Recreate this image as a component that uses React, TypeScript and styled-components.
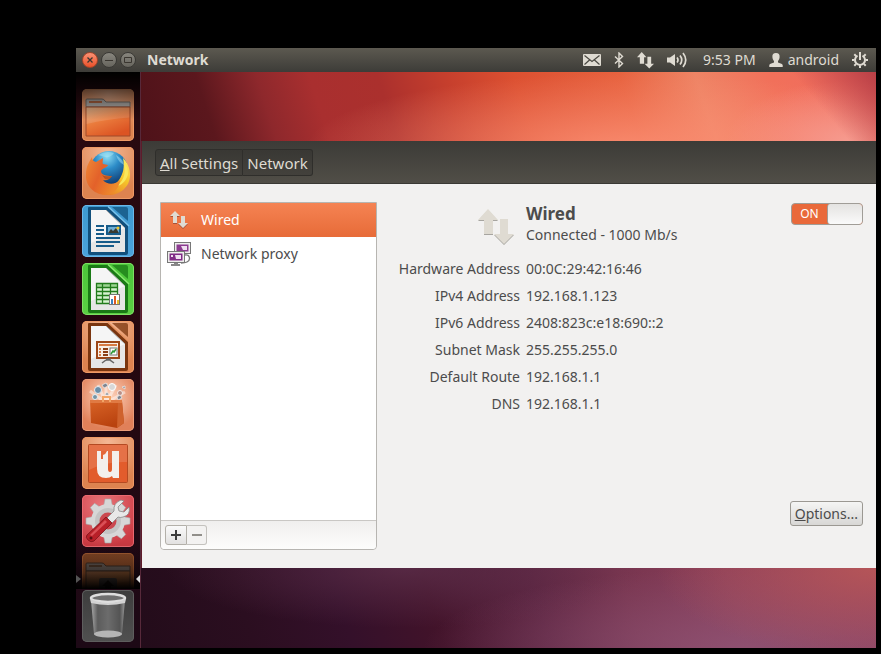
import React from "react";
import styled, { createGlobalStyle } from "styled-components";

const GlobalStyle = createGlobalStyle`
  *, *::before, *::after { box-sizing: border-box; }
  body {
    margin: 0;
    background: #000;
    font-family: "Noto Sans", "Open Sans", sans-serif;
    font-size: 14px;
    line-height: 20px;
    color: #4c4c4c;
  }
  button, input { font: inherit; color: inherit; }
  svg { display: block; }
  h1, h2, p, dl, dd, ul { margin: 0; padding: 0; }
`;

const Screen = styled.div`
  height: 100vh;
  padding: 48px 5px 6px 76px;
  display: flex;
  flex-direction: column;
`;

/* ---------- top panel ---------- */

const Panel = styled.header`
  flex: none;
  height: 24px;
  padding: 0 8px 0 6px;
  display: flex;
  align-items: center;
  gap: 3px;
  background: linear-gradient(#5c5950, #3d3c38);
  color: #dfdbd2;
`;

const WindowButton = styled.button<{ $close?: boolean }>`
  width: 16px;
  height: 16px;
  padding: 0;
  display: grid;
  place-items: center;
  border: 1px solid ${(p) => (p.$close ? "#a5452a" : "#3a3935")};
  border-radius: 50%;
  background: ${(p) =>
    p.$close ? "linear-gradient(#fb9274, #e9512a)" : "linear-gradient(#88867e, #66645d)"};
  color: #3a3630;
`;

const PanelTitle = styled.h1`
  margin-left: 8px;
  font-size: 14px;
  line-height: 24px;
  font-weight: 700;
`;

const Indicators = styled.div`
  margin-left: auto;
  display: flex;
  align-items: center;
  gap: 13px;
`;

const Indicator = styled.button`
  padding: 0;
  display: flex;
  align-items: center;
  gap: 5px;
  border: 0;
  background: none;
  line-height: 24px;
`;

const Clock = styled(Indicator)`
  padding-left: 2px;
`;

/* ---------- launcher ---------- */

const Desktop = styled.div`
  flex: 1;
  min-height: 0;
  display: flex;
`;

const Launcher = styled.nav`
  flex: none;
  width: 65px;
  padding-bottom: 6px;
  display: flex;
  flex-direction: column;
  gap: 1px;
  border-right: 1px solid #57293a;
  background: linear-gradient(#2a0a10, #25080f 50%, #1d0916);
`;

const LauncherList = styled.div`
  position: relative;
  flex: 1;
  min-height: 0;
  overflow: hidden;
  padding: 17px 6px 0;
  display: flex;
  flex-direction: column;
  gap: 6px;
`;

const LauncherShade = styled.div`
  position: absolute;
  inset: 0;
  pointer-events: none;
  background:
    linear-gradient(#000 0, rgba(0, 0, 0, 0.7) 14px, rgba(0, 0, 0, 0) 48px),
    linear-gradient(to top, #000 0, rgba(0, 0, 0, 0.4) 16px, rgba(0, 0, 0, 0.1) 34px, rgba(0, 0, 0, 0) 50px);
`;

const RunningMarks = styled.svg`
  position: absolute;
  left: 0;
  bottom: 5px;
  width: 100%;
  height: 10px;
`;

const tints = {
  orange: "radial-gradient(circle at 50% 10%, #f4b794, #dd8350 75%)",
  blue: "linear-gradient(#3d99cf, #4ba3dc)",
  green: "linear-gradient(#4bc63a, #5bd043)",
  coral: "radial-gradient(circle at 50% 35%, #ffd9c4, #e08059 75%)",
  red: "radial-gradient(circle at 40% 20%, #e8757a, #cc3b43 80%)",
  brown: "linear-gradient(#7b4223, #8f4c26)",
  grey: "linear-gradient(#3d3d3d, #505050)",
};
const edges = {
  orange: "#ee9a66",
  blue: "#6bb8e8",
  green: "#7fe065",
  coral: "#ea9c78",
  red: "#ea6a70",
  brown: "#a05a30",
  grey: "#5e5e5e",
};

const Tile = styled.button<{ $tint: keyof typeof tints }>`
  flex: none;
  width: 52px;
  height: 52px;
  padding: 0;
  display: grid;
  place-items: center;
  border: 0;
  border-radius: 5px;
  background: ${(p) => tints[p.$tint]};
  box-shadow: inset 0 0 0 1px ${(p) => edges[p.$tint]};
`;

const TrashSlot = styled.div`
  padding: 0 6px;
`;

/* ---------- wallpaper and window ---------- */

const Workspace = styled.main`
  flex: 1;
  min-width: 0;
  padding: 69px 0 80px 1px;
  display: flex;
  background:
    linear-gradient(50deg, rgba(190, 65, 70, 0) calc(100% - 65px), #b83f46 100%) 0 0 / 100% 69px no-repeat,
    radial-gradient(ellipse 120px 60px at 96% 100%, #f69a8e, rgba(245, 130, 115, 0) 100%) 0 0 / 100% 69px no-repeat,
    radial-gradient(ellipse 320px 75px at 66% 110%, rgba(252, 145, 118, 0.85), rgba(250, 130, 105, 0) 100%) 0 0 / 100% 69px no-repeat,
    linear-gradient(72deg, #4e1219 0, #5b171d 10%, #8e282c 18%, #a92f2f 25%, #ab302d 34%, #c63f2d 43%, #dc5031 52%, #e7623f 66%, #ee8465 76%, #f1705a 86%, #ef6a60 100%) 0 0 / 100% 69px no-repeat,
    radial-gradient(ellipse 220px 90px at 100% 0, #b55558, rgba(179, 80, 88, 0) 100%) 0 100% / 100% 80px no-repeat,
    radial-gradient(ellipse 320px 80px at 82% 100%, rgba(143, 84, 118, 0.8), rgba(143, 82, 117, 0) 100%) 0 100% / 100% 80px no-repeat,
    radial-gradient(ellipse 240px 60px at 36% 0, rgba(96, 50, 78, 0.7), rgba(85, 40, 70, 0) 100%) 0 100% / 100% 80px no-repeat,
    linear-gradient(74deg, #230c1a 0, #2b0e20 15%, #34102a 28%, #42132a 40%, #5c2440 54%, #78354f 66%, #8a3f5a 80%, #8f4060 100%) 0 100% / 100% 80px no-repeat,
    #5e1c2a;
`;

const Window = styled.section`
  flex: 1;
  min-width: 0;
  display: flex;
  flex-direction: column;
  background: #f2f1f0;
`;

const Toolbar = styled.div`
  flex: none;
  height: 43px;
  padding: 8px 13px;
  display: flex;
  align-items: flex-start;
  background: linear-gradient(#3c3b37, #514e47);
  border-bottom: 1px solid #3a3935;
`;

const Crumb = styled.button`
  height: 27px;
  padding: 0 4px;
  border: 1px solid #2f2e2b;
  background: linear-gradient(#393834, #43413c);
  color: #dfdbd2;
  font-size: 15px;
  line-height: 24px;
  &:first-child { border-radius: 3px 0 0 3px; }
  &:last-child { border-radius: 0 3px 3px 0; border-left: 0; }
`;

const Content = styled.div`
  flex: 1;
  min-height: 0;
  padding: 18px 13px 18px 18px;
  display: flex;
  gap: 12px;
`;

const DevicePane = styled.div`
  flex: none;
  width: 217px;
  display: flex;
  flex-direction: column;
  border: 1px solid #b7b5b1;
  border-radius: 0 0 4px 4px;
  background: #fff;
`;

const DeviceList = styled.ul`
  flex: 1;
  list-style: none;
`;

const DeviceRow = styled.button<{ $selected?: boolean }>`
  width: 100%;
  height: 34px;
  padding: 0 6px;
  display: flex;
  align-items: center;
  gap: 10px;
  border: 0;
  text-align: left;
  background: ${(p) => (p.$selected ? "linear-gradient(#f58353, #e76b38)" : "#fff")};
  color: ${(p) => (p.$selected ? "#fff" : "#4c4c4c")};
`;

const DeviceActions = styled.div`
  flex: none;
  height: 29px;
  padding: 4px;
  display: flex;
  border-top: 1px solid #c9c7c4;
  border-radius: 0 0 4px 4px;
  background: linear-gradient(#f0efee, #fdfdfc);
`;

const ActionButton = styled.button`
  width: 22px;
  height: 20px;
  padding: 0;
  display: grid;
  place-items: center;
  border: 1px solid #b3b0a9;
  border-radius: 3px 0 0 3px;
  background: linear-gradient(#fafafa, #e2e1e0);
  color: #3c3c3c;
  & + & {
    width: 20px;
    border-left: 0;
    border-radius: 0 3px 3px 0;
  }
  &:disabled {
    border-color: #c4c2be;
    background: #f3f2f1;
    color: #918f8a;
  }
`;

const Details = styled.div`
  flex: 1;
  min-width: 0;
  display: flex;
  flex-direction: column;
`;

const DetailsHeader = styled.div`
  display: flex;
  align-items: flex-start;
  gap: 6px;
  margin-bottom: 10px;
`;

const DeviceIcon = styled.div`
  width: 131px;
  padding: 7px 6px 0 0;
  display: flex;
  justify-content: flex-end;
`;

const DeviceHeading = styled.div`
  flex: 1;
  h2 {
    font-size: 17px;
    line-height: 23px;
    font-weight: 700;
  }
`;

const Switch = styled.label`
  margin-top: 1px;
  width: 72px;
  height: 22px;
  display: flex;
  border: 1px solid #a09d97;
  border-radius: 4px;
  background: #e9693a;
  color: #fff;
  font-size: 12px;
  line-height: 20px;
  input {
    appearance: none;
    order: 2;
    width: 35px;
    margin: 0;
    border-left: 1px solid #a09d97;
    border-radius: 3px;
    background: linear-gradient(#e4e3e1, #fafafa);
  }
  span {
    flex: 1;
    text-align: center;
  }
`;

const Facts = styled.dl`
  display: grid;
  grid-template-columns: 131px 1fr;
  column-gap: 6px;
  line-height: 27px;
  dt { text-align: right; }
`;

const OptionsButton = styled.button`
  align-self: flex-end;
  margin: auto 0 24px;
  height: 25px;
  padding: 0 4px;
  border: 1px solid #9b9892;
  border-radius: 3px;
  background: linear-gradient(#f5f5f4, #d8d7d5);
  line-height: 22px;
`;

/* ---------- drawings ---------- */

const UpDown = ({ size, shade }: { size: number; shade?: string }) => (
  <svg width={size} height={size} viewBox="0 0 36 36" aria-hidden="true">
    {shade && (
      <path fill={shade} transform="translate(0 1)" d="M10 0 20 11h-5v14H6V11H0zM22 10h8v15h6L26 35 16 25h6z" />
    )}
    <path fill="#dfdbd2" d="M10 0 20 11h-5v14H6V11H0zM22 10h8v15h6L26 35 16 25h6z" />
  </svg>
);

const Mail = () => (
  <svg width="18" height="12" viewBox="0 0 18 12" aria-hidden="true">
    <rect width="18" height="12" rx="1" fill="#dfdbd2" />
    <path d="M1.5 1.5 9 7.5l7.500-6M1.500 10.500 6.500 6M16.500 10.500 11.500 6" fill="none" stroke="#4a4842" strokeWidth="1.200" />
  </svg>
);

const Bluetooth = () => (
  <svg width="10" height="16" viewBox="0 0 10 16" aria-hidden="true">
    <path d="M1 4.500 8.500 11.500 5 15V1l3.500 3.500L1 11.500" fill="none" stroke="#dfdbd2" strokeWidth="1.400" />
  </svg>
);

const Volume = () => (
  <svg width="21" height="16" viewBox="0 0 21 16" aria-hidden="true" fill="none" stroke="#dfdbd2" strokeWidth="1.700">
    <path d="M0 5.500h3L8 2v12l-5-3.500H0z" fill="#dfdbd2" stroke="none" />
    <path d="M10 5.500q2 2.500 0 5M13 3.500q3.500 4.500 0 9M16 1q5.500 7 0 14" />
  </svg>
);

const Person = () => (
  <svg width="14" height="14" viewBox="0 0 14 14" aria-hidden="true">
    <path fill="#dfdbd2" d="M7 0c2.700 0 3.800 1.600 3.600 4-.1 1.900-.7 3-1.600 4v1.500c1.500.8 4.200.8 4.700 2.500V14H.3v-2c.5-1.700 3.200-1.700 4.700-2.500V8C4.100 7 3.500 5.900 3.400 4 3.200 1.600 4.300 0 7 0z" />
  </svg>
);

const PowerGear = () => (
  <svg width="16" height="16" viewBox="0 0 16 16" aria-hidden="true" fill="none" stroke="#dfdbd2">
    <path d="M5.500 3.600a5 5 0 1 0 5 0" strokeWidth="2" />
    <path d="M8 0v8" strokeWidth="2" />
    <path d="M0 8h2.500M13.500 8H16M8 13.500V16M2.300 2.300l1.800 1.800M13.700 2.300l-1.800 1.800M2.300 13.700l1.800-1.800M13.700 13.700l-1.800-1.800" strokeWidth="2" />
  </svg>
);

const ProxyScreens = () => (
  <svg width="24" height="24" viewBox="0 0 24 24" aria-hidden="true">
    <rect x="7.500" y=".5" width="16" height="11" fill="#eeeeec" stroke="#777" />
    <rect x="9.500" y="2.500" width="12" height="7" fill="#8c3b91" />
    <path d="M14 4h6v4h-4z" fill="#efdff0" />
    <path d="M18 13c5-1 6 5 2 7-2 1-4 1-6 1" fill="none" stroke="#777" strokeWidth="1.300" />
    <rect x=".5" y="9.500" width="17" height="11" fill="#eeeeec" stroke="#777" />
    <rect x="2.500" y="11.500" width="13" height="7" fill="#812b87" />
    <path d="M8 13h6v4H9zM4 13h2v2H4z" fill="#efdff0" />
    <path d="M7 21h4v1h2v2H4v-2h3z" fill="#888" />
  </svg>
);

const Folder = ({ dark }: { dark?: boolean }) => (
  <svg width="52" height="52" viewBox="0 0 52 52" aria-hidden="true">
    <defs>
      <linearGradient id={dark ? "folderDark" : "folder"} x1="0" y1="0" x2=".6" y2="1">
        <stop offset="0" stopColor={dark ? "#6d422a" : "#dba77a"} />
        <stop offset=".5" stopColor={dark ? "#70401f" : "#ea7b3c"} />
        <stop offset="1" stopColor={dark ? "#55301c" : "#dc5423"} />
      </linearGradient>
    </defs>
    <path d="M4 18v-7q0-1 1-1h15q2 0 3 2l1 1h24v5z" fill={dark ? "#5f5550" : "#b4b0ac"} stroke={dark ? "#3b2a20" : "#77706a"} />
    <path d="M7 12h13v2H7z" fill={dark ? "#4a3527" : "#b36743"} />
    <path d="M4 18h44v29H4z" fill={`url(#${dark ? "folderDark" : "folder"})`} stroke={dark ? "#3b2a20" : "#a04b2b"} />
    <path d="M4.500 18.500h43v10Q25 30 4.500 35z" fill="#fff" opacity={dark ? ".04" : ".12"} />
    {dark && (
      <g>
        <rect x="17" y="25" width="18" height="18" rx="2" fill="#3a3230" />
        <path d="m26 27 6 6h-3v5h-6v-5h-3z" fill="#17100c" />
      </g>
    )}
  </svg>
);

const Firefox = () => (
  <svg width="52" height="52" viewBox="0 0 52 52" aria-hidden="true">
    <defs>
      <radialGradient id="globe" cx=".45" cy=".15" r=".8">
        <stop offset="0" stopColor="#8cdcf2" />
        <stop offset=".4" stopColor="#2c8cc8" />
        <stop offset="1" stopColor="#0b2f66" />
      </radialGradient>
      <linearGradient id="fox" x1="0" y1="0" x2="1" y2=".5">
        <stop offset="0" stopColor="#f08a35" />
        <stop offset=".5" stopColor="#e3612a" />
        <stop offset="1" stopColor="#ee8a2b" />
      </linearGradient>
      <linearGradient id="flame" x1="1" y1="0" x2=".4" y2="1">
        <stop offset="0" stopColor="#fff06a" />
        <stop offset=".5" stopColor="#f6c52a" />
        <stop offset="1" stopColor="#e8792b" />
      </linearGradient>
    </defs>
    <circle cx="27" cy="23" r="19" fill="url(#globe)" />
    <path d="M16 8q8-5 16-2-3 5-9 4zM34 8q7 4 8 10-6-3-8-10z" fill="#a8e5f5" opacity=".5" />
    <path d="M41 11c5 5 7 11 7 17 0 12-10 20-21 20-9 0-17-5-20-14 10 8 24 8 30-1 4-6 6-13 4-22z" fill="url(#flame)" />
    <path d="M42 16c2 7 1 17-7 23 6-1 10-7 11-12 0-5-1-8-4-11z" fill="#f9e85c" />
    <path d="M10 10c0 3 1 4 4 5l7-4c0 3-1 5 0 6l5 1c-1 3-6 3-7 6 0 4 5 5 11 5-2 3-5 5-9 4 4 5 12 5 17 0-1 9-7 15-15 15C11 47 3 38 4 27c0-7 3-12 6-17z" fill="url(#fox)" />
    <path d="M20 28c3 2 7 1 10 1-1 3-4 4-7 3z" fill="#903d1d" opacity=".55" />
  </svg>
);

const OfficePage = ({ dark, pale, children }: { dark: string; pale: string; children: React.ReactNode }) => (
  <svg width="52" height="52" viewBox="0 0 52 52" aria-hidden="true">
    <path d="M6 3q0-1 1-1h20l19 18v28q0 2-2 2H8q-2 0-2-2z" fill={dark} />
    <path d="M30 2h14q2 0 2 2v12z" fill={dark} opacity=".75" />
    <path d="M26 1.500 47 21" stroke={pale} strokeWidth="1.500" />
    <path d="M9 5h15l19 18v24H9z" fill="#e6e6e6" />
    <path d="M9 5h15l19 18L9 38z" fill="#fff" opacity=".6" />
    <path d="M24 5 43 23" stroke="#aaa" />
    {children}
  </svg>
);

const Writer = () => (
  <OfficePage dark="#12507c" pale="#7cc4ec">
    <path d="M14 21h8M14 25h8M14 29h8M14 33h24M14 37h24M14 41h18" stroke="#165b89" strokeWidth="2" />
    <rect x="25" y="21" width="13" height="8" fill="#6daed5" stroke="#165b89" strokeWidth="2" />
    <path d="m26 28 3-4 2 2 3-3 3 5z" fill="#3a3a30" />
    <circle cx="36" cy="23" r="1.500" fill="#f0c62a" />
  </OfficePage>
);

const Calc = () => (
  <OfficePage dark="#1a7a16" pale="#8deb72">
    <path d="M14 20h22v21H14z" fill="#d6f2cf" />
    <path d="M14 20h22v4H14z" fill="#9cd592" />
    <path d="M14.500 20.500h21v20h-21zM14 24.500h22M14 28.500h22M14 32.500h22M14 36.500h22M20.500 20v21M28.500 20v21" fill="none" stroke="#227c1c" strokeWidth="1.300" />
    <rect x="27.500" y="31.500" width="10" height="10" fill="#fff" stroke="#777" />
    <path d="M29 36h2v5h-2z" fill="#3b83c0" />
    <path d="M32 33h2v8h-2z" fill="#dd5b25" />
    <path d="M35 37h2v4h-2z" fill="#e8c02b" />
  </OfficePage>
);

const Impress = () => (
  <OfficePage dark="#7a350f" pale="#e79563">
    <rect x="15" y="21" width="22" height="16" fill="#f8efe7" stroke="#9c4617" strokeWidth="2" />
    <path d="M17 24h18" stroke="#d77a43" strokeWidth="2" />
    <path d="M17 28h2M17 31h2M17 34h2" stroke="#d77a43" strokeWidth="2" />
    <path d="M21 28h5M21 31h5M21 34h5" stroke="#8b3d13" strokeWidth="2" />
    <rect x="28" y="27" width="7" height="7" fill="#fff" stroke="#777" />
    <path d="m29 33 2-3 1 1 2-3" fill="none" stroke="#2f9a35" strokeWidth="1.500" />
    <path d="M24 38h4v1l4 3M24 39l-4 3M24 39h4" fill="none" stroke="#666" strokeWidth="1.500" />
  </OfficePage>
);

const SoftwareBag = () => (
  <svg width="52" height="52" viewBox="0 0 52 52" aria-hidden="true">
    <defs>
      <linearGradient id="bag" x1="0" y1="0" x2=".4" y2="1">
        <stop offset="0" stopColor="#d96427" />
        <stop offset="1" stopColor="#b9420f" />
      </linearGradient>
    </defs>
    <path d="M24 24 8 12M24 24 16 6M24 24V4M24 24 34 6M24 24 43 13" stroke="#fff" strokeWidth="3" opacity=".45" />
    <circle cx="16" cy="11" r="3.500" fill="#6a8ea8" stroke="#e8eef2" />
    <circle cx="30" cy="8" r="3.500" fill="#d8d8d8" stroke="#fff" />
    <circle cx="13" cy="18" r="2.500" fill="#7694a5" stroke="#e8eef2" />
    <circle cx="38" cy="14" r="2.500" fill="#bb8f85" stroke="#f5eae5" />
    <path d="M23 16q2-5 4 0zM20 6l4-2 2 3-4 2zM35 18l3-2 2 3-4 2zM40 8l3-1v3z" fill="#7e8590" stroke="#eee" strokeWidth=".7" />
    <path d="m8 21 32 1 2 22-7 5L9 44z" fill="url(#bag)" />
    <path d="m40 22 2 22-7 5 1-27z" fill="#cf622d" />
    <path d="M8 21h32v3H8z" fill="#e07a43" />
    <path d="M21 23v-5h7v5" fill="none" stroke="#f2a567" strokeWidth="2" />
  </svg>
);

const UbuntuOne = () => (
  <svg width="52" height="52" viewBox="0 0 52 52" aria-hidden="true">
    <rect x="6.500" y="7.500" width="39" height="38" rx="1" fill="#e25c2c" stroke="#b44a22" />
    <path d="M7 8h38v17Q25 24 7 33z" fill="#fff" opacity=".13" />
    <path d="M15 14h11v18q0 3 2 3t2-3V14h7v27h-6l-1-2q-2 2-6 2-9 0-9-9z" fill="#f3efec" />
    <path d="M19 14h6q-1 3-4 4v4h-2z" fill="#e4683a" />
    <path d="m21 19 2-1v3h-2z" fill="#f3efec" />
  </svg>
);

const Gear = () => (
  <svg width="52" height="52" viewBox="0 0 52 52" aria-hidden="true">
    <g fill="#d7d7d7" stroke="#aaa" strokeWidth=".6">
      {[0, 45, 90, 135].map((a) => (
        <path key={a} transform={`rotate(${a} 26 26)`} d="M22 9 23 4h6l1 5v34l-1 5h-6l-1-5z" />
      ))}
    </g>
    <circle cx="26" cy="26" r="17" fill="#d7d7d7" />
    <circle cx="26" cy="26" r="13" fill="#c4c4c4" />
    <circle cx="26" cy="26" r="8.500" fill="#cb484f" />
    <path d="m24 24 8-8q-1-8 7-11l3 1-6 6 1 4 5 1 5-5q2 8-6 10-3 1-5 0l-8 8z" fill="#e8e8e8" stroke="#888" strokeWidth=".8" />
    <path d="m24 22 6 6-18 18q-3 2-6-1t-1-5z" fill="#b81f28" stroke="#7e1219" strokeWidth=".8" />
    <path d="m23 25 2 2-15 14-2-1z" fill="#e8646a" opacity=".7" />
    <circle cx="9" cy="43" r="1.500" fill="#5b0d12" />
  </svg>
);

const Trash = () => (
  <svg width="52" height="52" viewBox="0 0 52 52" aria-hidden="true">
    <defs>
      <linearGradient id="can" x1="0" x2="1">
        <stop offset="0" stopColor="#aaa" />
        <stop offset=".2" stopColor="#5c5c5c" />
        <stop offset=".5" stopColor="#6c6c6c" />
        <stop offset=".85" stopColor="#545454" />
        <stop offset="1" stopColor="#999" />
      </linearGradient>
    </defs>
    <path d="m9 10 3 34q14 7 28 0l3-34z" fill="url(#can)" />
    <ellipse cx="26" cy="44" rx="14" ry="3.500" fill="#b5b5b5" />
    <ellipse cx="26" cy="8" rx="17" ry="4" fill="#6f6f6f" stroke="#dedede" strokeWidth="2.500" />
    <path d="M8 9q18 8 36 0l-1 4q-17 4-34 0z" fill="#d2d2d2" />
  </svg>
);

/* ---------- page ---------- */

const apps: { name: string; tint: keyof typeof tints; icon: React.ReactNode }[] = [
  { name: "Home Folder", tint: "orange", icon: <Folder /> },
  { name: "Firefox Web Browser", tint: "orange", icon: <Firefox /> },
  { name: "LibreOffice Writer", tint: "blue", icon: <Writer /> },
  { name: "LibreOffice Calc", tint: "green", icon: <Calc /> },
  { name: "LibreOffice Impress", tint: "orange", icon: <Impress /> },
  { name: "Ubuntu Software Center", tint: "coral", icon: <SoftwareBag /> },
  { name: "Ubuntu One", tint: "orange", icon: <UbuntuOne /> },
  { name: "System Settings", tint: "red", icon: <Gear /> },
  { name: "Files", tint: "brown", icon: <Folder dark /> },
];

const facts = [
  ["Hardware Address", "00:0C:29:42:16:46"],
  ["IPv4 Address", "192.168.1.123"],
  ["IPv6 Address", "2408:823c:e18:690::2"],
  ["Subnet Mask", "255.255.255.0"],
  ["Default Route", "192.168.1.1"],
  ["DNS", "192.168.1.1"],
];

export default function App() {
  return (
    <Screen>
      <GlobalStyle />
      <Panel>
        <WindowButton $close aria-label="Close">
          <svg width="6" height="6" viewBox="0 0 6 6" stroke="currentColor" strokeWidth="1.300">
            <path d="m.5.5 5 5m0-5-5 5" />
          </svg>
        </WindowButton>
        <WindowButton aria-label="Minimize">
          <svg width="8" height="6" viewBox="0 0 8 6" stroke="currentColor">
            <path d="M0 3.500h8" />
          </svg>
        </WindowButton>
        <WindowButton aria-label="Maximize">
          <svg width="8" height="6" viewBox="0 0 8 6" stroke="currentColor" fill="none">
            <path d="M.5.5h7v5h-7z" />
          </svg>
        </WindowButton>
        <PanelTitle>Network</PanelTitle>
        <Indicators>
          <Indicator aria-label="Messages"><Mail /></Indicator>
          <Indicator aria-label="Bluetooth"><Bluetooth /></Indicator>
          <Indicator aria-label="Network connections"><UpDown size={17} /></Indicator>
          <Indicator aria-label="Volume"><Volume /></Indicator>
          <Clock>9:53 PM</Clock>
          <Indicator><Person />android</Indicator>
          <Indicator aria-label="Session"><PowerGear /></Indicator>
        </Indicators>
      </Panel>
      <Desktop>
        <Launcher aria-label="Launcher">
          <LauncherList>
            {apps.map((a) => (
              <Tile key={a.name} $tint={a.tint} aria-label={a.name}>{a.icon}</Tile>
            ))}
            <LauncherShade />
            <RunningMarks viewBox="0 0 64 10" aria-hidden="true">
              <path d="m0 1 5 4-5 4z" fill="#555" />
              <path d="m64 1-4 4 4 4z" fill="#ddd" />
            </RunningMarks>
          </LauncherList>
          <TrashSlot>
            <Tile $tint="grey" aria-label="Trash"><Trash /></Tile>
          </TrashSlot>
        </Launcher>
        <Workspace>
          <Window>
            <Toolbar>
              <Crumb><u>A</u>ll Settings</Crumb>
              <Crumb>Network</Crumb>
            </Toolbar>
            <Content>
              <DevicePane>
                <DeviceList>
                  <li>
                    <DeviceRow $selected>
                      <svg width="24" height="24" viewBox="-3 -3 24 24" aria-hidden="true">
                        <path fill="#a6533a" transform="translate(0 1)" d="M5 0 10 5H7v7H3V5H0zM11 5h4v7h3l-5 5-5-5h3z" />
                        <path fill="#dfdbd2" d="M5 0 10 5H7v7H3V5H0zM11 5h4v7h3l-5 5-5-5h3z" />
                      </svg>
                      Wired
                    </DeviceRow>
                  </li>
                  <li>
                    <DeviceRow><ProxyScreens />Network proxy</DeviceRow>
                  </li>
                </DeviceList>
                <DeviceActions>
                  <ActionButton aria-label="Add">
                    <svg width="10" height="10" viewBox="0 0 10 10" stroke="currentColor" strokeWidth="2"><path d="M0 5h10M5 0v10" /></svg>
                  </ActionButton>
                  <ActionButton aria-label="Remove" disabled>
                    <svg width="10" height="10" viewBox="0 0 10 10" stroke="currentColor" strokeWidth="2"><path d="M0 5h10" /></svg>
                  </ActionButton>
                </DeviceActions>
              </DevicePane>
              <Details>
                <DetailsHeader>
                  <DeviceIcon><UpDown size={36} shade="#a7a5a0" /></DeviceIcon>
                  <DeviceHeading>
                    <h2>Wired</h2>
                    <p>Connected - 1000 Mb/s</p>
                  </DeviceHeading>
                  <Switch>
                    <input type="checkbox" role="switch" defaultChecked />
                    <span>ON</span>
                  </Switch>
                </DetailsHeader>
                <Facts>
                  {facts.map(([k, v]) => (
                    <React.Fragment key={k}>
                      <dt>{k}</dt>
                      <dd>{v}</dd>
                    </React.Fragment>
                  ))}
                </Facts>
                <OptionsButton><u>O</u>ptions...</OptionsButton>
              </Details>
            </Content>
          </Window>
        </Workspace>
      </Desktop>
    </Screen>
  );
}
